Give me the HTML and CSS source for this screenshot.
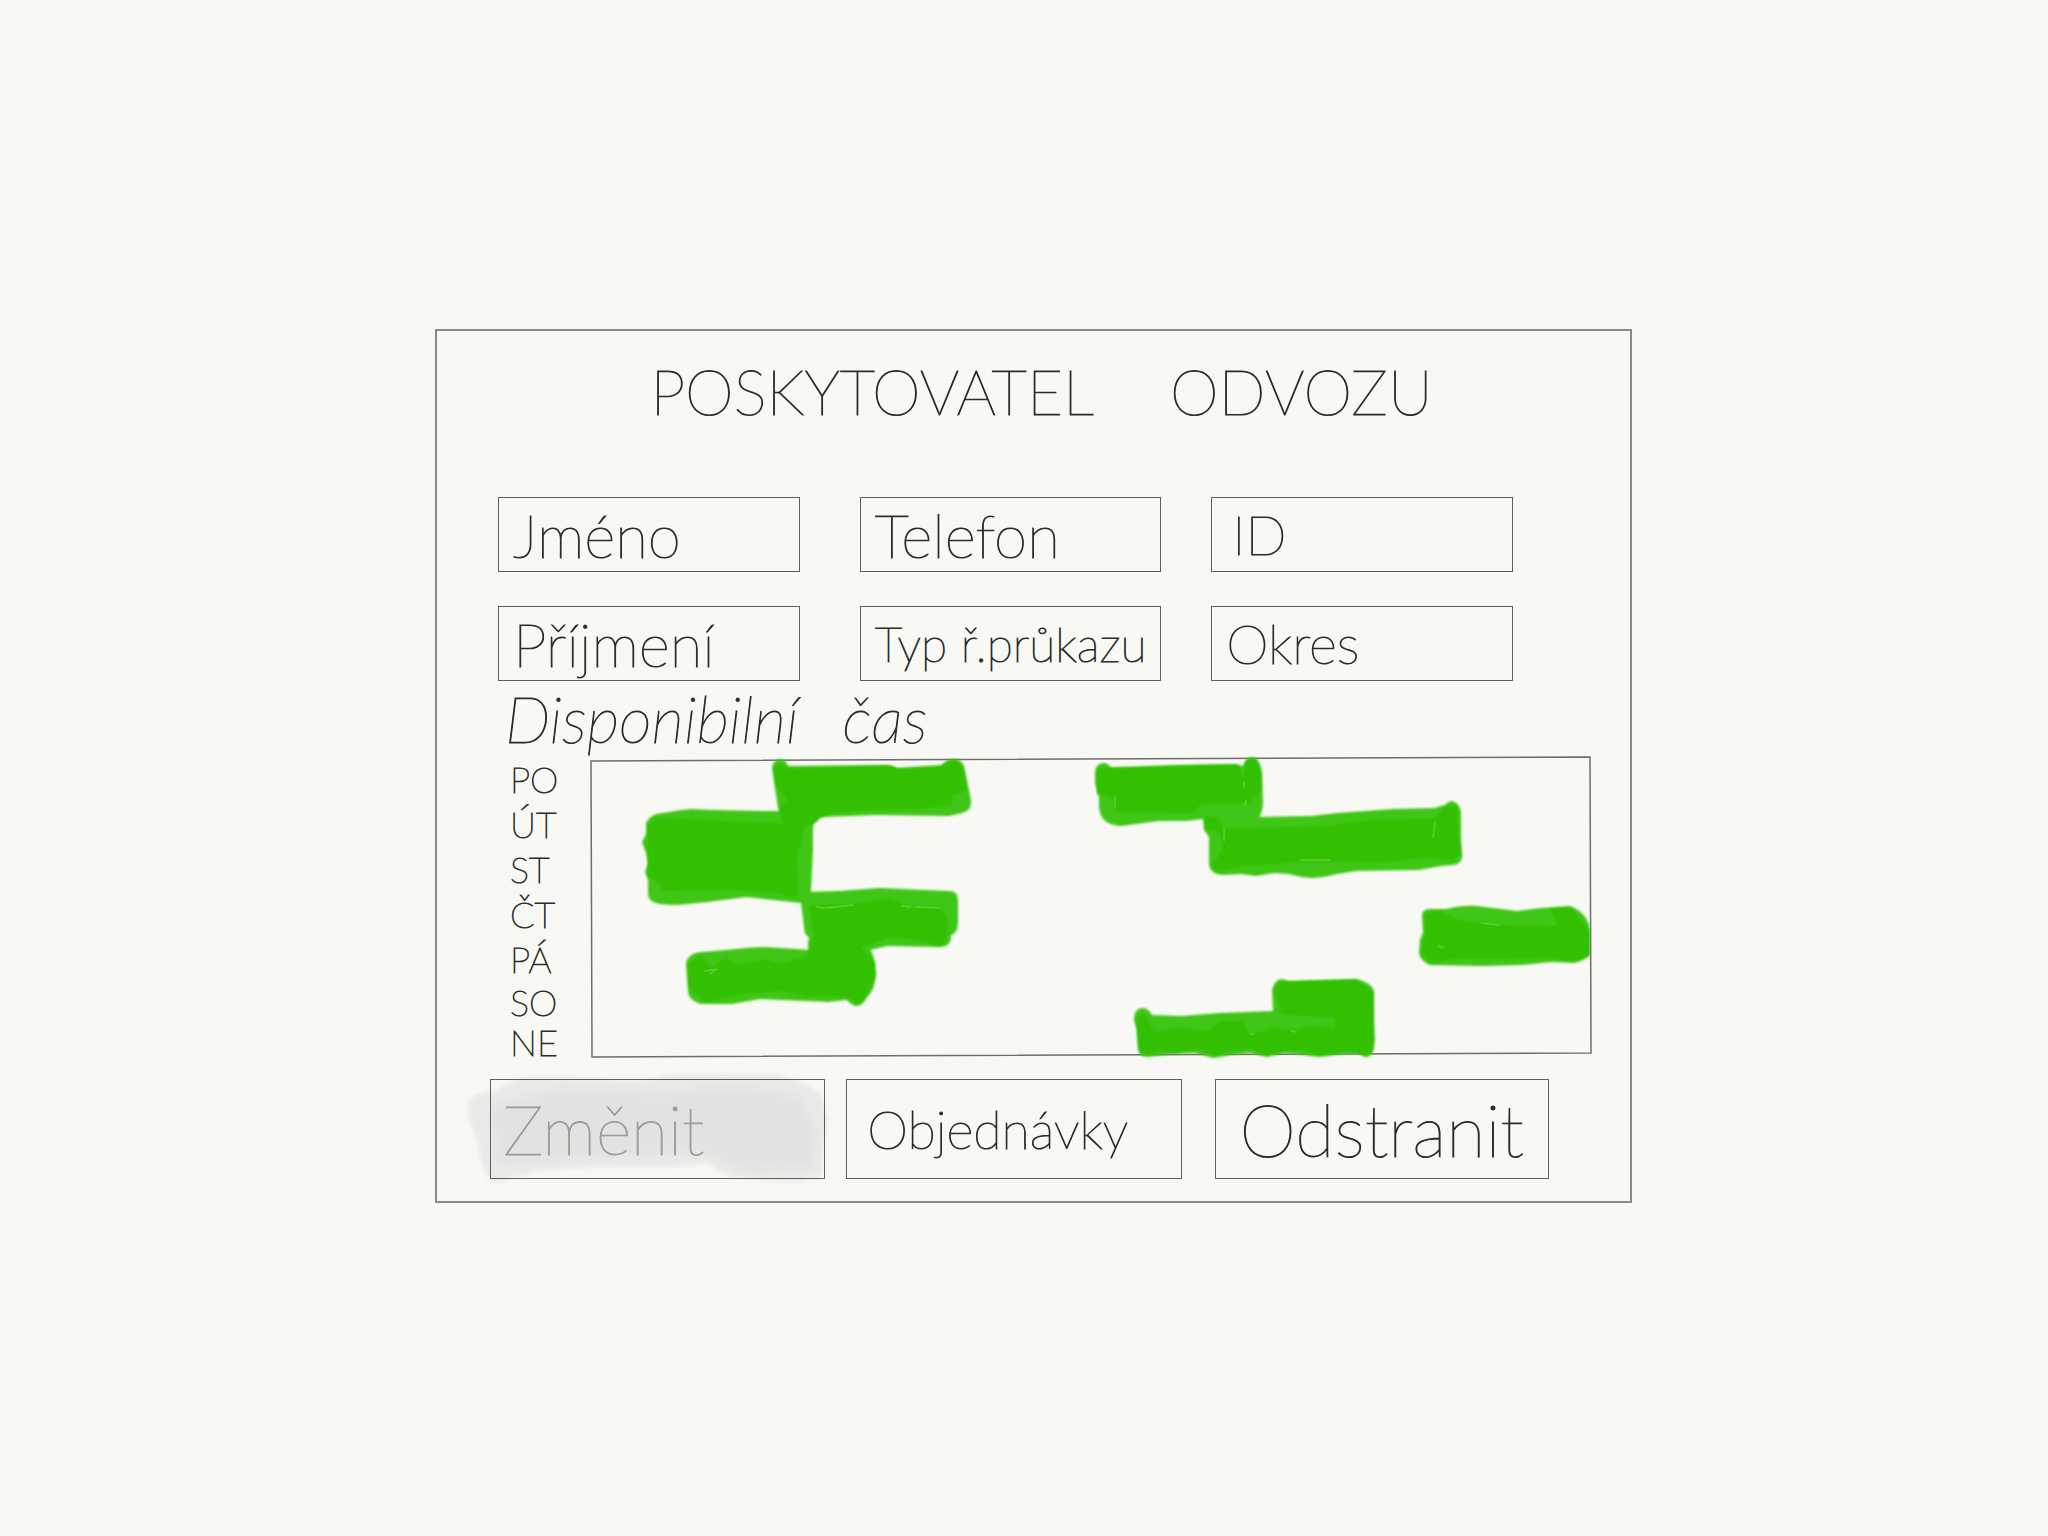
FILE: index.html
```html
<!DOCTYPE html>
<html lang="cs">
<head>
  <meta charset="utf-8">
  <meta name="viewport" content="width=device-width, initial-scale=1">
  <title>Poskytovatel odvozu</title>
  <link rel="stylesheet" href="styles.css">
</head>
<body>
  <main class="panel">
    <h1 class="title"><span>POSKYTOVATEL</span> <span>ODVOZU</span></h1>

    <form class="provider">
      <div class="fields">
        <div class="fields__column">
          <input class="field" type="text" aria-label="Jméno" placeholder="Jméno">
          <input class="field" type="text" aria-label="Příjmení" placeholder="Příjmení">
        </div>
        <div class="fields__column">
          <input class="field" type="text" aria-label="Telefon" placeholder="Telefon">
          <input class="field field--long" type="text" aria-label="Typ ř.průkazu" placeholder="Typ ř.průkazu">
        </div>
        <div class="fields__column">
          <input class="field field--inset" type="text" aria-label="ID" placeholder="ID">
          <input class="field field--short" type="text" aria-label="Okres" placeholder="Okres">
        </div>
      </div>

      <h2 class="subtitle"><span>Disponibilní</span> <span>čas</span></h2>

      <div class="schedule">
        <ul class="days">
          <li>PO</li>
          <li>ÚT</li>
          <li>ST</li>
          <li>ČT</li>
          <li>PÁ</li>
          <li>SO</li>
          <li>NE</li>
        </ul>
        <svg class="chart" viewBox="0 0 1000 300" role="img" aria-label="Disponibilní čas">
          <defs>
            <filter id="soft" x="-5%" y="-5%" width="110%" height="110%"><feGaussianBlur stdDeviation="0.9"/></filter>
          </defs>
          <path class="chart__frame" d="M0 4 L999 0 L1000 296 L1 300 Z"/>
          <g class="chart__wash" filter="url(#soft)">
            <path d="M181 11 Q182 3 189 2 Q195 2 197 9 L299 8 L306 11 L351 8 Q356 2 364 2 Q371 3 373 9 L380 43 Q381 54 371 56 L358 59 L286 58 L231 60 L200 66 L187 51 Z"/>
            <path d="M55 66 Q60 56 72 56 L90 53 L100 52 L125 53 L172 54 L189 54 L229 59 L227 64 L222 67 L222 93 L220 133 L216 147 L210 146 L155 140 L117 145 L86 148 Q68 148 62 145 Q57 142 57 136 L57 123 L54 115 L57 106 L55 96 L51 85 L55 77 Z"/>
            <path d="M210 146 L211 135 L248 134 L289 131 L358 134 Q367 134 367 143 L367 166 Q367 176 360 178 Q361 190 348 190 L296 189 L279 193 L220 200 Q215 190 218 180 Q213 178 213 170 Z"/>
            <path d="M95 206 Q97 196 110 195 L135 193 Q160 190 175 190 L220 193 L279 192 Q284 199 285 216 Q284 234 276 240 Q272 249 265 249 Q259 247 256 243 L237 245 L169 242 L141 247 L110 247 Q96 243 97 233 Z"/>
            <path d="M504 16 Q505 6 512 6 Q518 6 520 11 L587 8 L643 7 L652 9 Q655 0 661 0 Q669 0 671 16 L672 46 Q672 55 667 62 L612 62 L595 64 L567 64 L530 69 Q510 68 508 51 L508 40 L504 26 Z"/>
            <path d="M612 58 L669 60 L720 59 L746 56 L802 52 L843 51 L854 48 Q858 44 861 44 Q869 46 870 56 L870 80 L871 98 Q872 107 862 108 L850 109 L828 113 L765 114 L746 117 Q731 121 720 121 Q708 120 698 117 L683 116 L665 119 L650 117 L632 118 Q618 117 618 106 L618 80 L613 73 Z"/>
            <path d="M831 158 Q832 151 840 152 L856 152 Q870 148 886 149 L926 154 L950 151 L979 149 Q999 157 999 176 L999 198 Q995 203 983 206 L961 205 L931 208 L891 209 L839 208 Q829 204 828 196 L829 183 L832 175 Z"/>
            <path d="M681 233 Q684 222 691 222 L698 224 L765 222 Q782 226 783 235 L783 263 L784 283 L782 294 Q779 301 774 300 L767 296 L745 298 L728 300 L712 298 L693 296 L676 300 L659 296 L640 298 L622 301 L604 296 L580 297 L556 300 Q548 299 547 293 L546 273 L543 263 Q543 251 552 251 Q558 252 561 258 L591 259 L628 256 L682 254 Z"/>
          </g>
          <g class="chart__ink" filter="url(#soft)">
            <path d="M183 10 Q190 4 196 12 L296 9 L310 12 L350 10 Q354 4 364 3 L372 12 L376 34 L361 38 L361 48 L329 52 L285 53 L240 56 L226 62 L221 68 L193 68 L188 52 L196 43 L185 28 Z"/>
            <path d="M57 67 L66 61 L194 67 L200 62 L215 64 L210 85 L206 100 L207 137 L201 142 L190 136 L145 133 L72 134 L70 128 L57 119 Z"/>
            <path d="M218 148 L260 147 L300 142 L317 151 L350 151 L357 162 L356 180 L350 189 L325 183 L300 180 L270 190 L283 205 L284 220 L275 239 L266 247 L255 239 L218 239 L192 234 L152 237 L114 245 L98 230 L97 207 L110 198 L120 211 L135 201 L149 208 L176 202 L190 207 L217 199 L223 178 Z"/>
            <path d="M506 11 L648 8 L652 22 L655 4 L664 2 L670 16 L670 34 L657 46 L612 47 L598 56 L525 55 L521 40 L506 37 Z"/>
            <path d="M613 58 L628 61 L633 72 L735 69 L780 63 L843 62 L853 50 L866 49 L867 79 L870 98 L861 102 L832 101 L784 106 L730 104 L682 107 L653 108 L626 115 L621 108 L632 91 L629 75 L615 73 Z"/>
            <path d="M833 156 L850 154 L867 163 L905 168 L966 169 L959 152 L980 151 L998 173 L998 198 L982 204 L957 201 L920 202 L862 202 L838 206 L830 194 L835 176 Z"/>
            <path d="M683 232 L688 225 L765 223 L782 235 L782 294 L773 298 L754 294 L728 298 L711 293 L693 294 L676 298 L658 291 L622 298 L605 291 L584 296 L567 293 L556 298 L548 292 L545 262 L553 255 L563 276 L590 270 L616 275 L629 264 L650 264 L660 278 L683 270 L700 274 L721 268 L744 272 L744 260 L690 258 Z"/>
          </g>
          <g class="chart__scratch">
            <path d="M226 150 L233 151 M235 151 L262 148 M311 149 L319 150 M325 150 L350 151 M114 214 L126 212 L119 217"/>
            <path d="M653 25 L653 31 M655 43 L654 48 M633 72 L633 84 M710 103 L739 103 M844 66 L842 80 M524 40 L524 50"/>
            <path d="M890 166 L908 168 M848 189 L852 191 M659 277 L663 277 M701 274 L704 275"/>
          </g>
        </svg>
      </div>

      <div class="actions">
        <div class="action">
          <svg class="smear" viewBox="0 0 368 120" preserveAspectRatio="none" aria-hidden="true">
            <defs>
              <filter id="haze" x="-5%" y="-10%" width="110%" height="120%"><feGaussianBlur stdDeviation="2"/></filter>
              <filter id="haze-wide" x="-10%" y="-20%" width="120%" height="140%"><feGaussianBlur stdDeviation="6"/></filter>
            </defs>
            <path fill="#eaebe9" filter="url(#haze)" d="M3 30 Q8 24 28 22 Q50 6 75 6 L110 7 L170 12 L205 4 L310 4 Q335 8 358 24 L365 50 L360 80 L358 108 L330 115 L285 110 Q256 110 246 94 L228 98 L165 99 L120 99 L80 102 L46 109 Q36 119 24 112 Q14 95 11 72 L3 50 Z"/>
            <path fill="#e2e3e1" filter="url(#haze-wide)" d="M24 38 L90 20 L200 24 L260 16 L335 26 L352 60 L350 100 L280 103 L240 84 L150 88 L60 92 L30 96 Z"/>
          </svg>
          <button class="button button--wide" type="button" disabled>Změnit</button>
        </div>
        <div class="action">
          <button class="button button--narrow" type="button">Objednávky</button>
        </div>
        <div class="action action--last">
          <button class="button button--large" type="button">Odstranit</button>
        </div>
      </div>
    </form>
  </main>
</body>
</html>
```
FILE: styles.css
```css
*,
*::before,
*::after {
  box-sizing: border-box;
}

body {
  margin: 0;
  min-height: 100vh;
  display: grid;
  grid-template-columns: 435fr 1197fr 416fr;
  grid-template-rows: 329fr auto 333fr;
  background: #f8f9f5;
  color: #2c2c2b;
  font-family: Lato, "Open Sans", sans-serif;
  font-weight: 100;
}

.panel {
  grid-column: 2;
  grid-row: 2;
  border: 2px solid #8a8a86;
  padding: 24px 0 22px;
}

.title {
  display: flex;
  justify-content: center;
  gap: 76px;
  margin: 0 0 70px;
  padding-left: 16px;
  font-size: 62px;
  line-height: 72px;
  font-weight: 100;
  -webkit-text-stroke: 1px;
}

.fields {
  display: flex;
  gap: 50px;
  padding: 0 117px 0 61px;
}

.fields__column {
  flex: 1;
  min-width: 0;
  display: flex;
  flex-direction: column;
  gap: 34px;
}

.fields__column:first-child {
  margin-right: 10px;
}

.field {
  width: 100%;
  height: 75px;
  padding: 0 14px;
  border: 1px solid #5e5e5b;
  border-radius: 0;
  background: transparent;
  color: inherit;
  font: inherit;
  font-size: 60px;
  -webkit-text-stroke: 1px;
}

.field--long {
  font-size: 48px;
}

.field--short,
.field--inset {
  font-size: 54px;
}

.field--inset {
  padding-left: 20px;
}

.field::placeholder {
  color: inherit;
  opacity: 1;
}

.subtitle {
  display: flex;
  gap: 44px;
  margin: 8px 0;
  padding-left: 68px;
  font-size: 64px;
  line-height: 60px;
  font-weight: 100;
  font-style: italic;
  -webkit-text-stroke: 1px;
}

.schedule {
  display: flex;
  align-items: flex-start;
  padding: 0 39px 0 73px;
}

.days {
  flex: none;
  width: 81px;
  margin: 0;
  padding: 0;
  list-style: none;
  font-size: 36px;
  line-height: 45px;
  -webkit-text-stroke: 1px;
}

.days li:nth-child(n + 6) {
  line-height: 40px;
}

.chart {
  flex: 1;
  min-width: 0;
  overflow: visible;
}

.chart__frame {
  fill: none;
  stroke: #6e6e6b;
  stroke-width: 1.5;
}

.chart__wash {
  fill: #41c617;
}

.chart__ink {
  fill: #31c000;
}

.chart__scratch {
  fill: none;
  stroke: #5ccf3a;
  stroke-width: 1.5;
  stroke-linecap: round;
}

.actions {
  display: flex;
  gap: 21px;
  margin-top: 17px;
  padding: 0 81px 0 53px;
}

.action {
  position: relative;
  flex: 100 1 0;
}

.action--last {
  flex-grow: 98;
  margin-left: 12px;
}

.button {
  position: relative;
  display: block;
  width: 100%;
  height: 100px;
  padding: 0 24px;
  border: 1px solid #5e5e5b;
  border-radius: 0;
  background: transparent;
  color: inherit;
  font: inherit;
  line-height: 80px;
  text-align: left;
  -webkit-text-stroke: 1px;
}

.button--wide {
  padding: 0 12px;
  font-size: 68px;
}

.button--narrow {
  padding: 0 20px;
  font-size: 52px;
}

.button--large {
  font-size: 72px;
}

.button:disabled {
  color: #9b9b99;
}

.smear {
  position: absolute;
  top: -9px;
  left: -24px;
  width: calc(100% + 30px);
  height: calc(100% + 18px);
}
```
